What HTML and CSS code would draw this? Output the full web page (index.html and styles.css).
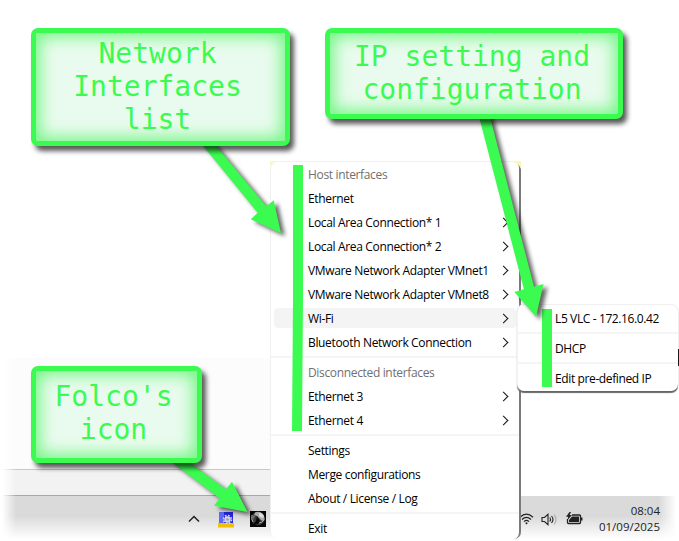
FILE: index.html
```html
<!DOCTYPE html>
<html lang="en">
<head>
<meta charset="utf-8">
<title>Folco overview</title>
<link rel="stylesheet" href="styles.css">
</head>
<body>
<main class="desktop">
  <div class="space"></div>
  <div class="window-body"></div>
  <div class="window-status"></div>
  <footer class="taskbar">
    <div class="tray">
      <svg class="chevron" width="12" height="8" viewBox="0 0 12 8"><path d="M1 6.500 6 1.500l5 5" fill="none" stroke="#222" stroke-width="1.500"/></svg>
      <svg class="gear" width="16" height="16" viewBox="0 0 16 16">
        <path fill="#2424dc" d="M1 0h14v11H1z"/><path fill="#5c68f4" d="M1 0h5v11H1z"/><path fill="#edc204" d="M0 11h16v4.500H0z"/>
        <circle cx="9.500" cy="7.500" r="3.200" fill="#d6d6e2"/>
        <circle cx="9.500" cy="7.500" r="4" fill="none" stroke="#d6d6e2" stroke-width="1.600" stroke-dasharray="1.700 1.440"/>
        <circle cx="9.500" cy="7.500" r="1.300" fill="#9a96a8"/>
      </svg>
      <svg class="globe" width="16" height="16" viewBox="0 0 16 16">
        <path fill="#050505" d="M0 0h16v16H0z"/><circle cx="8" cy="7.500" r="6.800" fill="#393939"/>
        <path fill="#aaa" d="M5 1.500Q9-.5 13 3q2 3 1.500 6-3 2-4.500-1L7 5 4 4z"/>
        <path fill="#ddd" d="M9 2q4 0 5 4l-2 1-3-2z"/>
        <path d="M2 4q-1 4 1 7M9 12q3 0 5-3" fill="none" stroke="#aaa"/>
        <path fill="#050505" d="M7 5l3 5-2 3-5 1 3-4z"/><path fill="#777" d="M2 4l3 1-2 4z"/>
      </svg>
    </div>
    <div class="status">
      <svg width="15" height="12" viewBox="0 0 15 12" fill="none" stroke="#222" stroke-width="1.200"><path d="M1 4.200Q7.500-1.900 14 4.200M3 6.500q4.500-4.200 9 0M5 8.600q2.500-2.300 5 0"/><circle cx="7.500" cy="10.300" r="1" fill="#222" stroke="none"/></svg>
      <svg width="17" height="13" viewBox="0 0 17 13" fill="none" stroke="#222" stroke-width="1.100"><path d="M1 4.500h2.500L7 1.300v10.400L3.500 8.500H1zM8.800 4.500q1.500 2 0 4M10.500 3q3 3.500 0 7"/><path d="M13 1.500q4 5 0 10" stroke="#aaa"/></svg>
      <svg width="17" height="13" viewBox="0 0 17 13"><path d="M6 3h7.500q1 0 1 1v6.500q0 1-1 1h-11q-1 0-1-1V7" fill="none" stroke="#222" stroke-width="1.300"/><path d="M6 4.500h7v5.500H3V8z" fill="#222"/><path d="M15 5.500h1.500v3H15z" fill="#222"/><path d="M3.500 0 0 4.800h2.200L1.500 8 6 3H3.600L5 0z" fill="#222"/></svg>
    </div>
    <div class="clock"><span>08:04</span><span>01/09/2025</span></div>
  </footer>
</main>

<nav class="menu main-menu">
  <div class="item heading">Host interfaces</div>
  <div class="item">Ethernet</div>
  <div class="item sub">Local Area Connection* 1</div>
  <div class="item sub">Local Area Connection* 2</div>
  <div class="item sub">VMware Network Adapter VMnet1</div>
  <div class="item sub">VMware Network Adapter VMnet8</div>
  <div class="item sub active">Wi-Fi</div>
  <div class="item sub">Bluetooth Network Connection</div>
  <hr>
  <div class="item heading">Disconnected interfaces</div>
  <div class="item sub">Ethernet 3</div>
  <div class="item sub">Ethernet 4</div>
  <hr>
  <div class="item">Settings</div>
  <div class="item">Merge configurations</div>
  <div class="item">About / License / Log</div>
  <hr>
  <div class="item">Exit</div>
</nav>

<div class="edge-mark"></div>
<nav class="menu ip-menu">
  <div class="item">L5 VLC - 172.16.0.42</div>
  <hr>
  <div class="item">DHCP</div>
  <hr>
  <div class="item">Edit pre-defined IP</div>
</nav>

<svg class="annotations" width="679" height="541" viewBox="0 0 679 541">
  <path class="corner" d="M512 161h9v8q-2-6-9-7zM270 161h6q-4 1-6 5z"/>
  <g class="bars"><path d="M293 165h10v132l-1 134h-10l1-134z"/><path d="M542 309h10v78h-10z"/></g>
  <g class="arrows">
    <path d="M200 142l57.700 70.700-7 6.600 30.300 14-7.300-33-7.400 6L213 142z"/>
    <path d="M478.600 115l45.300 174.300-9.500 2.600L536 316.700l7.500-32.700-9.500 2.700L489.500 115z"/>
    <path d="M169 460l50.500 38.200-5.500 7.500 33.500 6.300L232 481.700l-6 7.500L186 460z"/>
  </g>
</svg>

<section class="callout callout-list">Network<br>Interfaces<br>list</section>
<section class="callout callout-ip">IP setting and<br>configuration</section>
<section class="callout callout-icon">Folco's<br>icon</section>
</body>
</html>
```
FILE: styles.css
```css
* { box-sizing: border-box; }
body {
  position: relative;
  width: 679px;
  height: 541px;
  margin: 0;
  overflow: hidden;
  background: #fff;
  font: 12px "Open Sans", "Noto Sans", sans-serif;
  color: #000;
}
.desktop { display: flex; flex-direction: column; height: 541px; }
.space { height: 358px; }
.window-body, .window-status { width: 272px; margin-left: 2px; }
.window-body { height: 111px; background: linear-gradient(90deg, #fff, #fcfcfc 12px); }
.window-status {
  height: 27px;
  background: #f2f2f2;
  border-top: 1px solid #c8c8c8;
  border-bottom: 1px solid #a8a8a8;
  mask-image: linear-gradient(90deg, transparent, #000 14px);
}
.taskbar {
  display: flex;
  width: 677px;
  height: 45px;
  margin-left: 2px;
  background:
    linear-gradient(180deg, transparent 20px, #fff 43px),
    linear-gradient(90deg, #fff, transparent 14px, transparent 657px, #fff 674px),
    #dadada;
}
.tray { display: flex; align-items: flex-start; padding: 15px 0 0 186px; width: 517px; }
.chevron { margin: 4px 18px 0 0; }
.gear { margin: 1px 16px 0 0; }
.status { display: flex; align-items: center; gap: 7px; height: 46px; }
.status svg + svg + svg { margin: -2px 0 0 1px; }
.clock {
  display: flex;
  flex-direction: column;
  width: 79px;
  padding: 7px 2px 0 0;
  font-size: 11.500px;
  line-height: 16px;
  text-align: right;
  color: #222;
}
.menu { position: absolute; background: #fff; border-radius: 7px; }
.main-menu {
  left: 270px;
  top: 161px;
  width: 251px;
  height: 378px;
  padding: 0 3px;
  border: solid #f0f0f0;
  border-width: 1px 2px 0 1px;
  border-right-color: #7b7b7b;
}
.item {
  display: flex;
  align-items: center;
  justify-content: space-between;
  height: 24px;
  padding-left: 34px;
  padding-right: 9px;
  letter-spacing: -0.340px;
  white-space: nowrap;
}
.heading { color: #707070; }
.sub::after {
  content: "";
  width: 6px;
  height: 6px;
  border: solid #111;
  border-width: 1.200px 1.200px 0 0;
  transform: rotate(45deg);
}
.active { height: 20px; margin: 2px 0; background: #f4f4f4; border-radius: 4px; }
hr { height: 2px; margin: 2px -3px; border: 0; background: #f5f5f5; }
.ip-menu {
  left: 517px;
  top: 304px;
  width: 161px;
  height: 87px;
  padding: 1px 3px;
  border-top: 1px solid #f0f0f0;
  border-left: 1px solid #f3f3f3;
  box-shadow: 0 1.500px 1px #666;
}
.ip-menu .item { letter-spacing: -0.380px; }
.edge-mark { position: absolute; left: 678px; top: 349px; width: 1px; height: 17px; background: #111; }
.callout {
  position: absolute;
  border: 5px solid #3cfb50;
  border-radius: 7px;
  background: #e9fbee;
  box-shadow: inset 0 0 16px 4px #74f684, 4px 5px 5px rgba(0, 0, 0, .65);
  color: #3cfb50;
  font: 28px/33px "DejaVu Sans Mono", monospace;
  text-align: center;
}
.callout-list { left: 30.500px; top: 27.500px; width: 259px; height: 118px; padding: 4px 5px 0 0; }
.callout-ip { left: 324.500px; top: 27.500px; width: 298px; height: 91px; padding: 7px 3px 0 0; }
.callout-icon { left: 30.500px; top: 365.500px; width: 171px; height: 97.500px; padding: 9px 5px 0 0; }
.annotations { position: absolute; left: 0; top: 0; fill: #3cfb50; }
.corner { fill: #fbf9b4; }
.arrows { filter: drop-shadow(4px 3px 2px rgba(0, 0, 0, .6)); }
```
